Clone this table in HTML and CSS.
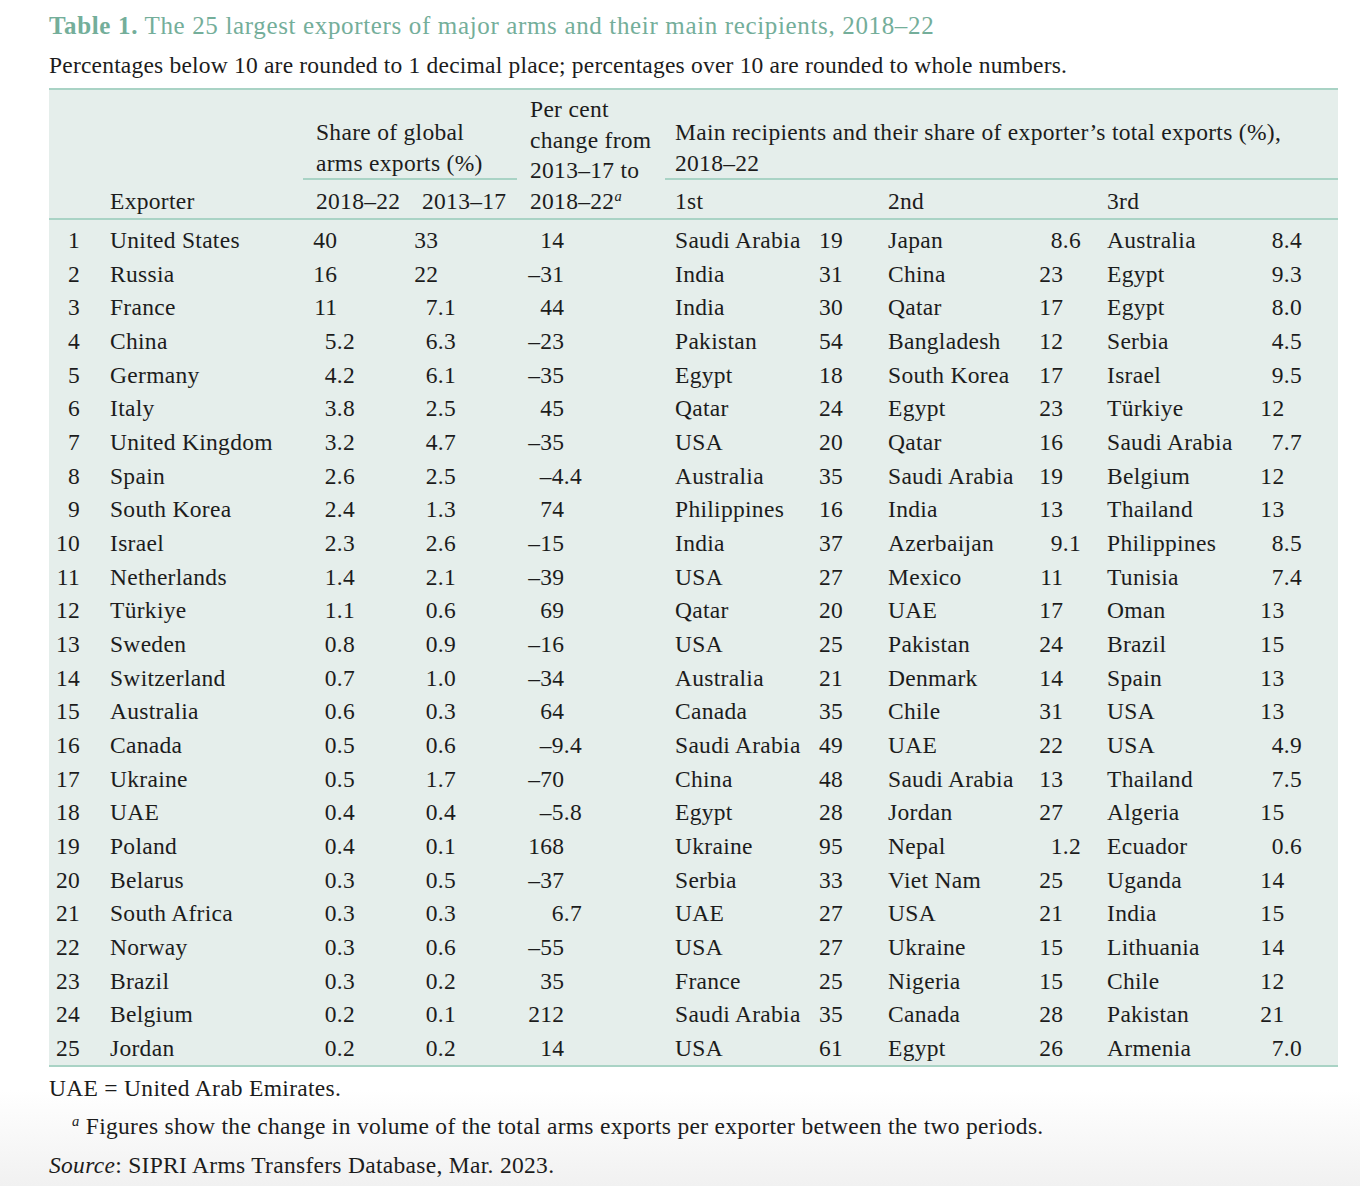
FILE: index.html
```html
<!DOCTYPE html>
<html lang="en">
<head>
<meta charset="utf-8">
<title>Table 1</title>
<link rel="stylesheet" href="styles.css">
</head>
<body>
<div class="page">
  <h1 class="title"><b>Table 1.</b> The 25 largest exporters of major arms and their main recipients, 2018–22</h1>
  <p class="subtitle">Percentages below 10 are rounded to 1 decimal place; percentages over 10 are rounded to whole numbers.</p>
  <table class="arms">
    <colgroup>
      <col class="w-rank"><col class="w-exp"><col class="w-s1"><col class="w-s2"><col class="w-pc">
      <col class="w-r1n"><col class="w-r1v"><col class="w-r2n"><col class="w-r2v"><col class="w-r3n"><col class="w-r3v">
    </colgroup>
    <thead>
      <tr class="hr-a">
        <th colspan="2"></th>
        <th colspan="2" class="h-share"><div class="straddle share">Share of global<br>arms exports (%)</div></th>
        <th rowspan="2" class="h-pc">Per cent<br>change from<br>2013–17 to<br>2018–22<sup>a</sup></th>
        <th colspan="6" class="h-main"><div class="straddle main">Main recipients and their share of exporter’s total exports (%),<br>2018–22</div></th>
      </tr>
      <tr class="hr-b">
        <th></th>
        <th class="h-exp">Exporter</th>
        <th class="h-s1">2018–22</th>
        <th class="h-s2">2013–17</th>
        <th colspan="2" class="h-r1">1st</th>
        <th colspan="2" class="h-r2">2nd</th>
        <th colspan="2" class="h-r3">3rd</th>
      </tr>
    </thead>
    <tbody>
      <tr><td>1</td><td>United States</td><td class="i">40</td><td class="i">33</td><td class="i">14</td><td>Saudi Arabia</td><td>19</td><td>Japan</td><td>8.6</td><td>Australia</td><td>8.4</td></tr>
      <tr><td>2</td><td>Russia</td><td class="i">16</td><td class="i">22</td><td class="i">–31</td><td>India</td><td>31</td><td>China</td><td class="i">23</td><td>Egypt</td><td>9.3</td></tr>
      <tr><td>3</td><td>France</td><td class="i">11</td><td>7.1</td><td class="i">44</td><td>India</td><td>30</td><td>Qatar</td><td class="i">17</td><td>Egypt</td><td>8.0</td></tr>
      <tr><td>4</td><td>China</td><td>5.2</td><td>6.3</td><td class="i">–23</td><td>Pakistan</td><td>54</td><td>Bangladesh</td><td class="i">12</td><td>Serbia</td><td>4.5</td></tr>
      <tr><td>5</td><td>Germany</td><td>4.2</td><td>6.1</td><td class="i">–35</td><td>Egypt</td><td>18</td><td>South Korea</td><td class="i">17</td><td>Israel</td><td>9.5</td></tr>
      <tr><td>6</td><td>Italy</td><td>3.8</td><td>2.5</td><td class="i">45</td><td>Qatar</td><td>24</td><td>Egypt</td><td class="i">23</td><td>Türkiye</td><td class="i">12</td></tr>
      <tr><td>7</td><td>United Kingdom</td><td>3.2</td><td>4.7</td><td class="i">–35</td><td>USA</td><td>20</td><td>Qatar</td><td class="i">16</td><td>Saudi Arabia</td><td>7.7</td></tr>
      <tr><td>8</td><td>Spain</td><td>2.6</td><td>2.5</td><td>–4.4</td><td>Australia</td><td>35</td><td>Saudi Arabia</td><td class="i">19</td><td>Belgium</td><td class="i">12</td></tr>
      <tr><td>9</td><td>South Korea</td><td>2.4</td><td>1.3</td><td class="i">74</td><td>Philippines</td><td>16</td><td>India</td><td class="i">13</td><td>Thailand</td><td class="i">13</td></tr>
      <tr><td>10</td><td>Israel</td><td>2.3</td><td>2.6</td><td class="i">–15</td><td>India</td><td>37</td><td>Azerbaijan</td><td>9.1</td><td>Philippines</td><td>8.5</td></tr>
      <tr><td>11</td><td>Netherlands</td><td>1.4</td><td>2.1</td><td class="i">–39</td><td>USA</td><td>27</td><td>Mexico</td><td class="i">11</td><td>Tunisia</td><td>7.4</td></tr>
      <tr><td>12</td><td>Türkiye</td><td>1.1</td><td>0.6</td><td class="i">69</td><td>Qatar</td><td>20</td><td>UAE</td><td class="i">17</td><td>Oman</td><td class="i">13</td></tr>
      <tr><td>13</td><td>Sweden</td><td>0.8</td><td>0.9</td><td class="i">–16</td><td>USA</td><td>25</td><td>Pakistan</td><td class="i">24</td><td>Brazil</td><td class="i">15</td></tr>
      <tr><td>14</td><td>Switzerland</td><td>0.7</td><td>1.0</td><td class="i">–34</td><td>Australia</td><td>21</td><td>Denmark</td><td class="i">14</td><td>Spain</td><td class="i">13</td></tr>
      <tr><td>15</td><td>Australia</td><td>0.6</td><td>0.3</td><td class="i">64</td><td>Canada</td><td>35</td><td>Chile</td><td class="i">31</td><td>USA</td><td class="i">13</td></tr>
      <tr><td>16</td><td>Canada</td><td>0.5</td><td>0.6</td><td>–9.4</td><td>Saudi Arabia</td><td>49</td><td>UAE</td><td class="i">22</td><td>USA</td><td>4.9</td></tr>
      <tr><td>17</td><td>Ukraine</td><td>0.5</td><td>1.7</td><td class="i">–70</td><td>China</td><td>48</td><td>Saudi Arabia</td><td class="i">13</td><td>Thailand</td><td>7.5</td></tr>
      <tr><td>18</td><td>UAE</td><td>0.4</td><td>0.4</td><td>–5.8</td><td>Egypt</td><td>28</td><td>Jordan</td><td class="i">27</td><td>Algeria</td><td class="i">15</td></tr>
      <tr><td>19</td><td>Poland</td><td>0.4</td><td>0.1</td><td class="i">168</td><td>Ukraine</td><td>95</td><td>Nepal</td><td>1.2</td><td>Ecuador</td><td>0.6</td></tr>
      <tr><td>20</td><td>Belarus</td><td>0.3</td><td>0.5</td><td class="i">–37</td><td>Serbia</td><td>33</td><td>Viet Nam</td><td class="i">25</td><td>Uganda</td><td class="i">14</td></tr>
      <tr><td>21</td><td>South Africa</td><td>0.3</td><td>0.3</td><td>6.7</td><td>UAE</td><td>27</td><td>USA</td><td class="i">21</td><td>India</td><td class="i">15</td></tr>
      <tr><td>22</td><td>Norway</td><td>0.3</td><td>0.6</td><td class="i">–55</td><td>USA</td><td>27</td><td>Ukraine</td><td class="i">15</td><td>Lithuania</td><td class="i">14</td></tr>
      <tr><td>23</td><td>Brazil</td><td>0.3</td><td>0.2</td><td class="i">35</td><td>France</td><td>25</td><td>Nigeria</td><td class="i">15</td><td>Chile</td><td class="i">12</td></tr>
      <tr><td>24</td><td>Belgium</td><td>0.2</td><td>0.1</td><td class="i">212</td><td>Saudi Arabia</td><td>35</td><td>Canada</td><td class="i">28</td><td>Pakistan</td><td class="i">21</td></tr>
      <tr><td>25</td><td>Jordan</td><td>0.2</td><td>0.2</td><td class="i">14</td><td>USA</td><td>61</td><td>Egypt</td><td class="i">26</td><td>Armenia</td><td>7.0</td></tr>
    </tbody>
  </table>
  <p class="note first">UAE = United Arab Emirates.</p>
  <p class="note fn"><sup>a</sup> Figures show the change in volume of the total arms exports per exporter between the two periods.</p>
  <p class="note"><i>Source</i>: SIPRI Arms Transfers Database, Mar. 2023.</p>
</div>
</body>
</html>
```
FILE: styles.css
```css
html, body {
  margin: 0;
  padding: 0;
}
body {
  background: linear-gradient(to bottom, #ffffff 0, #ffffff 1090px, #f1f1f1 1186px);
  min-height: 1186px;
  color: #1c1c1c;
  font-family: "Liberation Serif", "Times New Roman", serif;
  font-size: 23.5px;
  letter-spacing: 0.3px;
}
.page {
  width: 1289px;
  padding: 8px 0 0 49px;
}
.title {
  margin: 0;
  font-size: 25px;
  font-weight: normal;
  color: #74ae9a;
  line-height: 36px;
  letter-spacing: 0.65px;
}
.title b {
  font-weight: bold;
}
.subtitle {
  margin: 3px 0 0;
  line-height: 36px;
  letter-spacing: 0.2px;
}
.arms {
  margin-top: 5px;
  width: 1289px;
  table-layout: fixed;
  border-collapse: collapse;
  background: #e5eeeb;
  border-top: 2px solid #a9d3c5;
  border-bottom: 2px solid #a9d3c5;
}
.w-rank { width: 46px; }
.w-exp { width: 208px; }
.w-s1 { width: 107px; }
.w-s2 { width: 107px; }
.w-pc { width: 148px; }
.w-r1n { width: 135px; }
.w-r1v { width: 73px; }
.w-r2n { width: 147px; }
.w-r2v { width: 77px; }
.w-r3n { width: 133px; }
.w-r3v { width: 108px; }

.arms th {
  font-weight: normal;
  text-align: left;
  padding: 0;
  line-height: 30.5px;
  vertical-align: bottom;
  white-space: nowrap;
}
.arms thead {
  border-bottom: 2px solid #a9d3c5;
}
.hr-a th {
  height: 90px;
}
.straddle {
  border-bottom: 2px solid #a9d3c5;
  padding-bottom: 0;
}
.straddle.share {
  padding-left: 13px;
}
.straddle.main {
  padding-left: 10px;
}
.hr-b th {
  height: 36px;
  padding-bottom: 2px;
}
.h-pc {
  padding: 0 0 2px 13px !important;
}
.h-pc sup, .fn sup {
  font-style: italic;
  font-size: 0.62em;
  vertical-align: 0.55em;
  line-height: 0;
}
.h-exp { padding-left: 15px !important; }
.h-s1 { padding-left: 13px !important; }
.h-s2 { padding-left: 12px !important; }
.h-r1 { padding-left: 10px !important; }
.h-r2 { padding-left: 15px !important; }
.h-r3 { padding-left: 10px !important; }

.arms td {
  padding: 1px 0 0;
  line-height: 32.67px;
  white-space: nowrap;
  vertical-align: middle;
}
.arms tbody tr:first-child td {
  padding-top: 4px;
}
.arms td:nth-child(1) { text-align: right; padding-right: 15px; }
.arms td:nth-child(2) { padding-left: 15px; }
.arms td:nth-child(3) { text-align: right; padding-right: 55px; }
.arms td:nth-child(4) { text-align: right; padding-right: 61px; }
.arms td:nth-child(5) { text-align: right; padding-right: 83px; }
.arms td:nth-child(6) { padding-left: 10px; }
.arms td:nth-child(7) { text-align: right; padding-right: 30px; }
.arms td:nth-child(8) { padding-left: 15px; }
.arms td:nth-child(9) { text-align: right; padding-right: 16px; }
.arms td:nth-child(10) { padding-left: 10px; }
.arms td:nth-child(11) { text-align: right; padding-right: 36px; }
.arms td:nth-child(3).i { padding-right: calc(55px + 0.75em); }
.arms td:nth-child(4).i { padding-right: calc(61px + 0.75em); }
.arms td:nth-child(5).i { padding-right: calc(83px + 0.75em); }
.arms td:nth-child(9).i { padding-right: calc(16px + 0.75em); }
.arms td:nth-child(11).i { padding-right: calc(36px + 0.75em); }

.note {
  margin: 0;
  line-height: 38.5px;
}
.note.first {
  margin-top: 2px;
}
.fn {
  padding-left: 23px;
}
```
